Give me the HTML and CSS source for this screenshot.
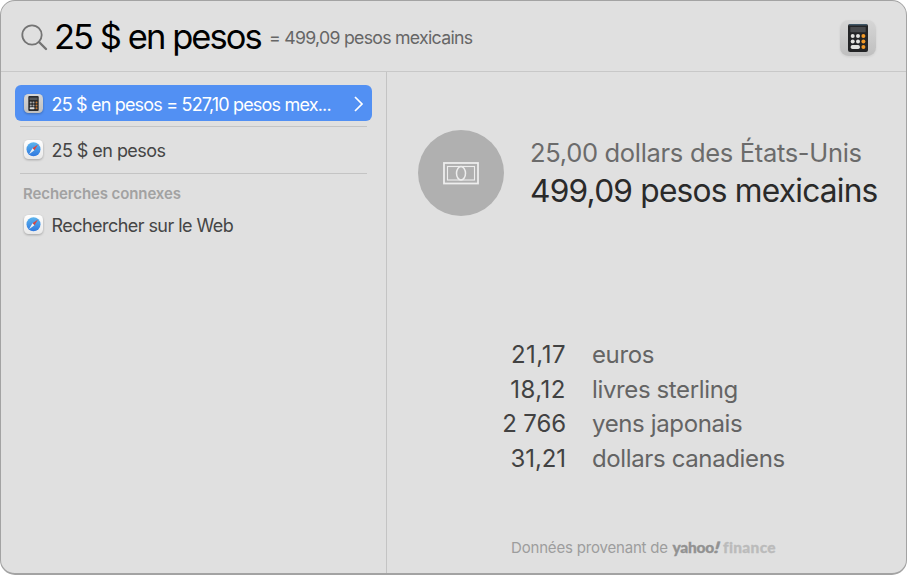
FILE: index.html
```html
<!DOCTYPE html>
<html lang="fr">
<head>
<meta charset="utf-8">
<title>Spotlight</title>
<link rel="stylesheet" href="styles.css">
</head>
<body>
<svg class="defs" width="0" height="0" aria-hidden="true">
  <defs>
    <linearGradient id="tile" x1="0" y1="0" x2="0" y2="1"><stop offset="0" stop-color="#d6d6d6"/><stop offset="1" stop-color="#bfbfbf"/></linearGradient>
    <linearGradient id="white" x1="0" y1="0" x2="0" y2="1"><stop offset="0" stop-color="#fff"/><stop offset="1" stop-color="#e9e9e9"/></linearGradient>
    <linearGradient id="blue" x1="0" y1="0" x2="0" y2="1"><stop offset="0" stop-color="#5bb4ee"/><stop offset="1" stop-color="#2f78df"/></linearGradient>
    <symbol id="calc" viewBox="0 0 36 36">
      <rect width="36" height="36" rx="8.5" fill="url(#tile)"/>
      <rect x="8" y="4" width="20" height="28" rx="2" fill="#232426"/>
      <rect x="9" y="4.2" width="18" height="1.2" fill="#486377"/>
      <rect x="10.300" y="7" width="15.400" height="5.200" rx=".6" fill="#484a4d"/>
      <g fill="#e2e2df"><circle cx="12.700" cy="16" r="2"/><circle cx="18" cy="16" r="2"/><circle cx="12.700" cy="21.500" r="2"/><circle cx="18" cy="21.500" r="2"/><rect x="10.700" y="25" width="9.200" height="4" rx="1.700"/></g>
      <g fill="#f29a28"><circle cx="23.400" cy="16" r="2"/><circle cx="23.400" cy="21.500" r="2"/><circle cx="23.400" cy="27" r="2"/></g>
    </symbol>
    <symbol id="calc-small" viewBox="0 0 19 19">
      <rect width="19" height="19" rx="4.500" fill="url(#tile)"/>
      <rect x="4.300" y="2" width="10.400" height="15" rx="1" fill="#2a2b2d"/>
      <rect x="5.500" y="3.600" width="8" height="2.400" fill="#555759"/>
      <g fill="#a9a9a8"><circle cx="6.800" cy="8.500" r="1"/><circle cx="9.500" cy="8.500" r="1"/><circle cx="6.800" cy="11.400" r="1"/><circle cx="9.500" cy="11.400" r="1"/><rect x="5.700" y="13.200" width="4.800" height="2.100" rx=".7" fill="#ddd"/></g>
      <g fill="#c87830"><circle cx="12.500" cy="8.500" r="1"/><circle cx="12.500" cy="11.400" r="1"/><circle cx="12.500" cy="14.300" r="1"/></g>
    </symbol>
    <symbol id="safari" viewBox="0 0 19 19">
      <rect width="19" height="19" rx="4.500" fill="url(#white)"/>
      <circle cx="9.500" cy="9.300" r="7" fill="url(#blue)"/>
      <path d="M14 4.400 8.500 8.300l1.900 1.900z" fill="#d9453f"/>
      <path d="M5 14.200 8.500 8.300l1.900 1.900z" fill="#edf0f4"/>
    </symbol>
  </defs>
</svg>
<main class="window">
  <header class="search">
    <svg class="glass" viewBox="0 0 27 27"><circle cx="11" cy="11" r="9.700"/><path class="handle" d="m18 18 7 7"/></svg>
    <span class="query">25 $ en pesos</span>
    <span class="answer">= 499,09 pesos mexicains</span>
    <svg class="app"><use href="#calc"/></svg>
  </header>
  <div class="body">
    <nav class="results">
      <div class="row selected">
        <svg class="icon"><use href="#calc-small"/></svg>
        <span class="label tight">25 $ en pesos = 527,10 pesos mex...</span>
        <svg class="chevron" viewBox="0 0 10 16"><path d="m1 1 7 7-7 7"/></svg>
      </div>
      <hr>
      <div class="row suggestion"><svg class="icon"><use href="#safari"/></svg><span class="label">25 $ en pesos</span></div>
      <hr>
      <h2>Recherches connexes</h2>
      <div class="row web"><svg class="icon"><use href="#safari"/></svg><span class="label">Rechercher sur le Web</span></div>
    </nav>
    <section class="preview">
      <div class="summary">
        <div class="badge"><svg viewBox="0 0 36 23"><rect class="outer" x="1" y="1" width="34" height="20.500"/><rect class="inner" x="4.500" y="4.500" width="27" height="13.500"/><ellipse cx="18" cy="11.300" rx="4.500" ry="6.700"/></svg></div>
        <div class="amounts"><p class="from">25,00 dollars des États-Unis</p><p class="to">499,09 pesos mexicains</p></div>
      </div>
      <dl class="rates">
        <dt class="wide">21,17</dt><dd>euros</dd>
        <dt class="wide">18,12</dt><dd>livres sterling</dd>
        <dt>2 766</dt><dd>yens japonais</dd>
        <dt>31,21</dt><dd>dollars canadiens</dd>
      </dl>
      <footer><span class="credit">Données provenant de</span><span class="yahoo">yahoo<i>!</i></span><span class="finance">finance</span></footer>
    </section>
  </div>
</main>
</body>
</html>
```
FILE: styles.css
```css
* { box-sizing: border-box; }
body { margin: 0; background: #fff; font-family: Inter, "Liberation Sans", sans-serif; overflow: hidden; }
.defs { position: absolute; }
p, h2, dl, dd { margin: 0; }
svg { flex: none; display: block; }
span, p, h2, dt, dd { white-space: nowrap; }
.window { width: 907px; height: 575px; border: 1px solid #a3a3a3; border-bottom-width: 2px; border-radius: 15px; background: #e0e0e0; overflow: hidden; }
.search { height: 71px; border-bottom: 1px solid #c8c8c8; display: flex; align-items: center; padding: 0 30px 0 20px; }
.glass { width: 27px; height: 27px; margin-top: 3px; fill: none; stroke: #747474; stroke-width: 1.800; stroke-linecap: round; }
.handle { stroke-width: 2.400; }
.query { font-size: 34.500px; line-height: 44px; letter-spacing: -1.950px; color: #000; margin: 1px 0 0 6px; width: 215px; }
.answer { font-size: 17.700px; line-height: 24px; letter-spacing: -.71px; color: #666; margin-top: 4px; }
.app { width: 36px; height: 36px; margin: 3px 0 0 auto; filter: drop-shadow(0 1px 1px #0001); }
.body { display: flex; height: 501px; }
.results { width: 386px; border-right: 1px solid #c4c4c4; padding: 13px 14px 0 14px; }
.row { display: flex; align-items: center; padding-left: 8.500px; }
.selected { height: 36px; border-radius: 6px; background: #5290f3; color: #fff; margin-bottom: 5px; }
.icon { width: 19px; height: 19px; margin-right: 9px; filter: drop-shadow(0 1px 1px #0004); }
.label { font-size: 18px; line-height: 24px; letter-spacing: -.55px; margin-top: 1px; }
.tight { letter-spacing: -.82px; margin-top: 3px; }
.chevron { width: 10px; height: 16px; margin: 1px 8px 0 auto; fill: none; stroke: #fff; stroke-width: 1.700; }
hr { height: 1px; border: 0; margin: 0 5px; background: #c4c4c4; }
.suggestion { height: 46px; color: #454545; }
h2 { font-size: 15px; line-height: 20px; font-weight: 600; color: #a2a2a2; margin: 10px 0 0 8px; letter-spacing: -.1px; }
.web { height: 42px; color: #454545; }
.suggestion .icon, .web .icon { margin-top: -1px; }
.preview { flex: 1; display: flex; flex-direction: column; padding-left: 31px; }
.summary { display: flex; margin-top: 58px; }
.badge { width: 86px; height: 86px; border-radius: 50%; background: #b0b0b0; display: flex; align-items: center; justify-content: center; }
.badge svg { width: 36px; height: 23px; fill: none; stroke: #eee; }
.outer { stroke-width: 1.800; }
.inner { stroke-width: 1.100; }
ellipse { stroke-width: 1.500; }
.amounts { margin: 6px 0 0 26px; }
.from { font-size: 25.500px; line-height: 34px; color: #6b6b6b; letter-spacing: -.31px; }
.to { font-size: 31.700px; line-height: 40px; color: #2a2a2a; letter-spacing: -.79px; padding-top: 1px; }
.rates { display: grid; grid-template-columns: 148px auto; column-gap: 26px; grid-auto-rows: 34.700px; margin-top: 122px; font-size: 24px; line-height: 34px; }
dt { text-align: right; color: #424242; letter-spacing: -.1px; }
.wide { letter-spacing: .5px; }
dd { color: #646464; letter-spacing: -.37px; }
footer { display: flex; margin: 61px 0 0 93px; font-size: 15px; line-height: 20px; color: #9d9d9d; }
.credit { width: 161.500px; letter-spacing: -.18px; }
.yahoo, .finance { font-family: Lato, sans-serif; font-weight: 900; font-size: 15.500px; line-height: 19px; -webkit-text-stroke: .3px currentColor; }
.yahoo { width: 50.500px; color: #929292; letter-spacing: -.25px; }
.yahoo i { display: inline-block; font-style: normal; transform: translateX(1px) skewX(-16deg) scaleX(1.3); }
.finance { color: #bbb; letter-spacing: .3px; }
```
